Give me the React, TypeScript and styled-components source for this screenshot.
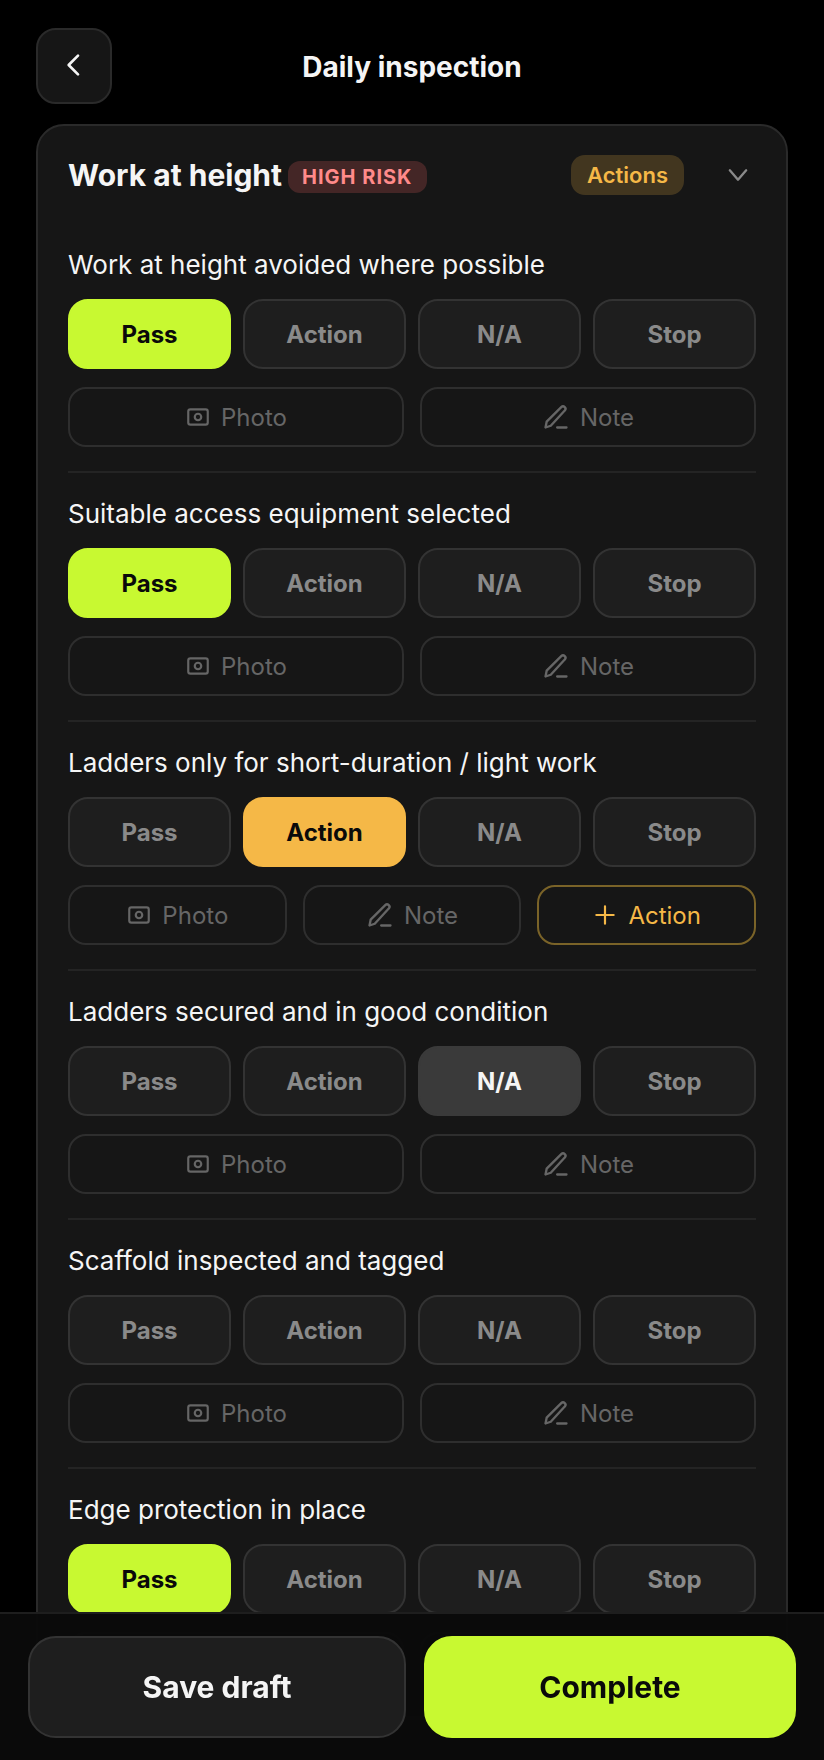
import React from 'react';
import styled, { createGlobalStyle } from 'styled-components';

type Status = 'pass' | 'action' | 'na' | 'stop' | null;

const GlobalStyle = createGlobalStyle`
    html, body {
        margin: 0;
        padding: 0;
        background: #000;
        font-family: Inter, "Liberation Sans", sans-serif;
    }
    * {
        box-sizing: border-box;
    }
`;

const Page = styled.div`
    width: 824px;
    height: 1760px;
    overflow: hidden;
    padding: 0 36px;
    background: #000;
`;

const Header = styled.header`
    display: grid;
    grid-template-columns: 76px 1fr 76px;
    align-items: center;
    height: 76px;
    margin-top: 28px;
`;

const BackButton = styled.button`
    display: flex;
    align-items: center;
    justify-content: center;
    width: 76px;
    height: 76px;
    padding: 0 0 2px;
    border: 2px solid #2a2a2a;
    border-radius: 20px;
    background: #161616;
    color: #f5f5f5;
`;

const Title = styled.h1`
    margin: 0;
    padding-top: 2px;
    text-align: center;
    font-size: 28px;
    font-weight: 700;
    color: #f5f5f5;
`;

const Card = styled.section`
    margin-top: 20px;
    padding: 0 30px;
    border: 2px solid #2a2a2a;
    border-radius: 28px;
    background: #161616;
`;

const CardHead = styled.div`
    display: flex;
    align-items: center;
    height: 98px;
`;

const CardTitle = styled.h2`
    margin: 0;
    font-size: 30px;
    font-weight: 700;
    color: #f5f5f5;
`;

const RiskBadge = styled.span`
    margin: 4px 0 0 6px;
    padding: 4px 14px;
    border-radius: 12px;
    background: rgba(255, 107, 107, 0.2);
    color: #ff8a8a;
    font-size: 20px;
    font-weight: 700;
    letter-spacing: 1px;
`;

const ActionsBadge = styled.span`
    margin-left: auto;
    padding: 7px 16px;
    border-radius: 14px;
    background: rgba(245, 184, 71, 0.2);
    color: #f5b847;
    font-size: 22px;
    font-weight: 600;
`;

const ChevronSlot = styled.span`
    display: flex;
    align-items: center;
    justify-content: center;
    width: 36px;
    margin-left: 36px;
    color: #8a8a8a;
`;

const Item = styled.div`
    padding: 25px 0 24px;
    border-bottom: 2px solid #242424;
`;

const Label = styled.div`
    font-size: 26px;
    line-height: 32px;
    color: #f5f5f5;
`;

const StatusRow = styled.div`
    display: grid;
    grid-template-columns: repeat(4, 1fr);
    gap: 12px;
    margin-top: 18px;
`;

const statusColors: Record<string, string> = {
    pass: 'background: #c8f931; border-color: #c8f931; color: #0a0a0a;',
    action: 'background: #f5b847; border-color: #f5b847; color: #0a0a0a;',
    na: 'background: #3a3a3a; border-color: #3a3a3a; color: #f5f5f5;',
    stop: 'background: #ff6b6b; border-color: #ff6b6b; color: #0a0a0a;',
};

const StatusButton = styled.button<{ $tone?: string }>`
    height: 70px;
    padding: 0;
    border: 2px solid #333;
    border-radius: 20px;
    background: #1e1e1e;
    color: #8a8a8a;
    font-family: inherit;
    font-size: 24px;
    font-weight: 700;
    ${(props) => (props.$tone ? statusColors[props.$tone] : '')}
`;

const ToolRow = styled.div<{ $count: number }>`
    display: grid;
    grid-template-columns: repeat(${(props) => props.$count}, 1fr);
    gap: ${(props) => (props.$count === 3 ? 16 : 16)}px;
    margin-top: 18px;
`;

const ToolButton = styled.button<{ $accent?: boolean }>`
    display: flex;
    align-items: center;
    justify-content: center;
    gap: 10px;
    height: 60px;
    padding: 0;
    border: 2px solid ${(props) => (props.$accent ? '#7a6328' : '#2e2e2e')};
    border-radius: 18px;
    background: transparent;
    color: ${(props) => (props.$accent ? '#f5b847' : '#666')};
    font-family: inherit;
    font-size: 24px;
    font-weight: 400;
`;

const Footer = styled.footer`
    position: fixed;
    left: 0;
    right: 0;
    bottom: 0;
    display: grid;
    grid-template-columns: 378px 372px;
    gap: 18px;
    height: 148px;
    padding: 22px 28px 0;
    border-top: 2px solid #1e1e1e;
    background: rgba(10, 10, 10, 0.97);
`;

const SaveButton = styled.button`
    height: 102px;
    border: 2px solid #333;
    border-radius: 28px;
    background: #1e1e1e;
    color: #f5f5f5;
    font-family: inherit;
    font-size: 30px;
    font-weight: 700;
`;

const CompleteButton = styled(SaveButton)`
    border-color: #c8f931;
    background: #c8f931;
    color: #0a0a0a;
`;

const CameraIcon = () => (
    <svg width="26" height="26" viewBox="0 0 24 24" fill="none" stroke="currentColor" strokeWidth="2" strokeLinecap="round" strokeLinejoin="round">
        <rect x="3" y="5" width="18" height="14" rx="2" />
        <circle cx="12" cy="12" r="3" />
    </svg>
);

const PenIcon = () => (
    <svg width="28" height="28" viewBox="0 0 24 24" fill="none" stroke="currentColor" strokeWidth="2" strokeLinecap="round" strokeLinejoin="round">
        <path d="M3 21l1-5L16.5 3.5a2.1 2.1 0 0 1 3 3L7.5 19.5z" />
        <path d="M13 21h8" />
    </svg>
);

const PlusIcon = () => (
    <svg width="26" height="26" viewBox="0 0 24 24" fill="none" stroke="currentColor" strokeWidth="2" strokeLinecap="round">
        <path d="M12 4v16M4 12h16" />
    </svg>
);

const items: { label: string; status: Status }[] = [
    { label: 'Work at height avoided where possible', status: 'pass' },
    { label: 'Suitable access equipment selected', status: 'pass' },
    { label: 'Ladders only for short-duration / light work', status: 'action' },
    { label: 'Ladders secured and in good condition', status: 'na' },
    { label: 'Scaffold inspected and tagged', status: null },
    { label: 'Edge protection in place', status: 'pass' },
];

const options: { key: Status; text: string }[] = [
    { key: 'pass', text: 'Pass' },
    { key: 'action', text: 'Action' },
    { key: 'na', text: 'N/A' },
    { key: 'stop', text: 'Stop' },
];

function App() {
    return (
        <Page>
            <GlobalStyle />
            <Header>
                <BackButton aria-label="Back">
                    <svg width="32" height="32" viewBox="0 0 24 24" fill="none" stroke="currentColor" strokeWidth="2" strokeLinecap="round" strokeLinejoin="round">
                        <path d="M15 5l-7 7 7 7" />
                    </svg>
                </BackButton>
                <Title>Daily inspection</Title>
            </Header>
            <Card>
                <CardHead>
                    <CardTitle>Work at height</CardTitle>
                    <RiskBadge>HIGH RISK</RiskBadge>
                    <ActionsBadge>Actions</ActionsBadge>
                    <ChevronSlot>
                        <svg width="28" height="28" viewBox="0 0 24 24" fill="none" stroke="currentColor" strokeWidth="2" strokeLinecap="round" strokeLinejoin="round">
                            <path d="M5 8l7 8 7-8" />
                        </svg>
                    </ChevronSlot>
                </CardHead>
                {items.map((item) => (
                    <Item key={item.label}>
                        <Label>{item.label}</Label>
                        <StatusRow>
                            {options.map((option) => (
                                <StatusButton
                                    key={option.text}
                                    $tone={item.status === option.key ? (option.key as string) : undefined}
                                >
                                    {option.text}
                                </StatusButton>
                            ))}
                        </StatusRow>
                        <ToolRow $count={item.status === 'action' ? 3 : 2}>
                            <ToolButton>
                                <CameraIcon />
                                Photo
                            </ToolButton>
                            <ToolButton>
                                <PenIcon />
                                Note
                            </ToolButton>
                            {item.status === 'action' && (
                                <ToolButton $accent>
                                    <PlusIcon />
                                    Action
                                </ToolButton>
                            )}
                        </ToolRow>
                    </Item>
                ))}
            </Card>
            <Footer>
                <SaveButton>Save draft</SaveButton>
                <CompleteButton>Complete</CompleteButton>
            </Footer>
        </Page>
    );
}

export default App;
